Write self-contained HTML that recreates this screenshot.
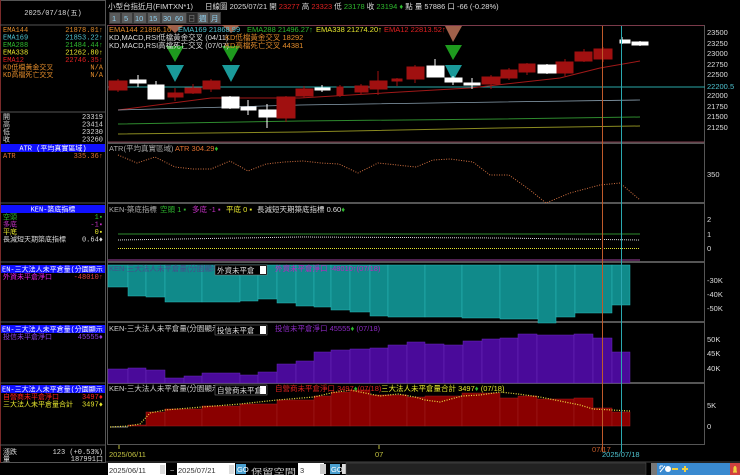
<!DOCTYPE html>
<html><head><meta charset="utf-8"><style>
html,body{margin:0;padding:0;background:#000;width:740px;height:475px;overflow:hidden}
svg{display:block}
text{font-family:"Liberation Sans","Noto Sans CJK TC",sans-serif;font-size:7.5px}
.m{font-family:"Liberation Mono","Noto Sans CJK TC",monospace;font-size:7px}
</style></head><body>
<svg width="740" height="475" viewBox="0 0 740 475" xmlns="http://www.w3.org/2000/svg">
<rect width="740" height="475" fill="#000"/>
<rect x="0.5" y="0.5" width="105" height="462" fill="#000" stroke="#555"/>
<line x1="0.5" y1="0" x2="0.5" y2="463" stroke="#7a2a2a"/>
<line x1="0" y1="25" x2="106" y2="25" stroke="#555"/>
<text x="53" y="15" fill="#ddd" text-anchor="middle" class="m">2025/07/18(五)</text>
<g class="m">
<text x="3" y="32" fill="#e08a2a" class="m">EMA144</text><text x="103" y="32" fill="#e08a2a" text-anchor="end" class="m">21878.01↑</text>
<text x="3" y="39.5" fill="#4fc3d0" class="m">EMA169</text><text x="103" y="39.5" fill="#4fc3d0" text-anchor="end" class="m">21853.22↑</text>
<text x="3" y="47" fill="#2eb82e" class="m">EMA288</text><text x="103" y="47" fill="#2eb82e" text-anchor="end" class="m">21484.44↑</text>
<text x="3" y="54.5" fill="#e6e62e" class="m">EMA338</text><text x="103" y="54.5" fill="#e6e62e" text-anchor="end" class="m">21262.80↑</text>
<text x="3" y="62" fill="#e02020" class="m">EMA12</text><text x="103" y="62" fill="#e02020" text-anchor="end" class="m">22746.35↑</text>
<text x="3" y="69.5" fill="#e08a2a" class="m">KD低檔黃金交叉</text><text x="103" y="69.5" fill="#e08a2a" text-anchor="end" class="m">N/A</text>
<text x="3" y="77" fill="#e08a2a" class="m">KD高檔死亡交叉</text><text x="103" y="77" fill="#e08a2a" text-anchor="end" class="m">N/A</text>
</g>
<line x1="0" y1="112" x2="106" y2="112" stroke="#555"/>
<text x="3" y="119" fill="#ddd" class="m">開</text><text x="103" y="119" fill="#ddd" text-anchor="end" class="m">23319</text>
<text x="3" y="126.5" fill="#ddd" class="m">高</text><text x="103" y="126.5" fill="#ddd" text-anchor="end" class="m">23414</text>
<text x="3" y="134" fill="#ddd" class="m">低</text><text x="103" y="134" fill="#ddd" text-anchor="end" class="m">23230</text>
<text x="3" y="141.5" fill="#ddd" class="m">收</text><text x="103" y="141.5" fill="#ddd" text-anchor="end" class="m">23260</text>
<rect x="1" y="144" width="104" height="8" fill="#1010ff"/>
<text x="53" y="150.5" fill="#fff" text-anchor="middle" class="m">ATR (平均真實區域)</text>
<text x="3" y="158" fill="#e07030" class="m">ATR</text><text x="103" y="158" fill="#e07030" text-anchor="end" class="m">335.36↑</text>
<line x1="0" y1="203" x2="106" y2="203" stroke="#555"/>
<rect x="1" y="205" width="104" height="8" fill="#1010ff"/>
<text x="53" y="211.5" fill="#fff" text-anchor="middle" class="m">KEN-築底指標</text>
<text x="3" y="219" fill="#2eb82e" class="m">空頭</text><text x="103" y="219" fill="#2eb82e" text-anchor="end" class="m">1▪</text>
<text x="3" y="226.5" fill="#c030c0" class="m">多底</text><text x="103" y="226.5" fill="#c030c0" text-anchor="end" class="m">-1▪</text>
<text x="3" y="234" fill="#e6e62e" class="m">平底</text><text x="103" y="234" fill="#e6e62e" text-anchor="end" class="m">0▪</text>
<text x="3" y="241.5" fill="#ddd" class="m">長減短天期築底指標</text><text x="103" y="241.5" fill="#ddd" text-anchor="end" class="m">0.64♦</text>
<line x1="0" y1="262" x2="106" y2="262" stroke="#555"/>
<rect x="1" y="265" width="104" height="8" fill="#1010ff"/>
<text x="2" y="271.5" fill="#fff" class="m">EN-三大法人未平倉量(分園顯示</text>
<text x="3" y="279" fill="#e020e0" class="m">外資未平倉淨口</text><text x="103" y="279" fill="#e04040" text-anchor="end" class="m">-48010↑</text>
<line x1="0" y1="322" x2="106" y2="322" stroke="#555"/>
<rect x="1" y="325" width="104" height="8" fill="#1010ff"/>
<text x="2" y="331.5" fill="#fff" class="m">EN-三大法人未平倉量(分園顯示</text>
<text x="3" y="339" fill="#9040e0" class="m">投信未平倉淨口</text><text x="103" y="339" fill="#9040e0" text-anchor="end" class="m">45555♦</text>
<line x1="0" y1="383" x2="106" y2="383" stroke="#555"/>
<rect x="1" y="385" width="104" height="8" fill="#1010ff"/>
<text x="2" y="391.5" fill="#fff" class="m">EN-三大法人未平倉量(分園顯示</text>
<text x="3" y="399" fill="#ff2020" class="m">自營商未平倉淨口</text><text x="103" y="399" fill="#ff2020" text-anchor="end" class="m">3497♦</text>
<text x="3" y="406.5" fill="#e6e62e" class="m">三大法人未平倉量合計</text><text x="103" y="406.5" fill="#e6e62e" text-anchor="end" class="m">3497♦</text>
<line x1="0" y1="445" x2="106" y2="445" stroke="#555"/>
<text x="3" y="454" fill="#ddd" class="m">漲跌</text><text x="103" y="454" fill="#ddd" text-anchor="end" class="m">123 (+0.53%)</text>
<text x="3" y="461" fill="#ddd" class="m">量</text><text x="103" y="461" fill="#ddd" text-anchor="end" class="m">187991口</text>

<text x="108" y="9" fill="#ddd">小型台指近月(FIMTXN*1)</text>
<text x="205" y="9" fill="#ddd">日線圖  2025/07/21 開 <tspan fill="#e02020">23277</tspan> 高 <tspan fill="#e02020">23323</tspan> 低 <tspan fill="#2eb82e">23178</tspan> 收 <tspan fill="#2eb82e">23194</tspan> <tspan fill="#2eb82e">♦</tspan> 點 量 57886 口 -66 (-0.28%)</text>
<g>
<rect x="109" y="12" width="112" height="12" fill="#3a3a3a"/>
<g fill="#5a5a5a">
<rect x="110" y="13" width="10" height="10"/><rect x="122" y="13" width="10" height="10"/><rect x="134" y="13" width="12" height="10"/><rect x="148" y="13" width="12" height="10"/><rect x="162" y="13" width="12" height="10"/><rect x="174" y="13" width="12" height="10"/><rect x="187" y="13" width="10" height="10" fill="#2a2a2a"/><rect x="198" y="13" width="10" height="10"/><rect x="210" y="13" width="10" height="10"/>
</g>
<g fill="#8fd0f0" font-size="7"><text x="112" y="21">1</text><text x="124" y="21">5</text><text x="135" y="21">10</text><text x="149" y="21">15</text><text x="163" y="21">30</text><text x="175" y="21">60</text><text x="188" y="21" fill="#777">日</text><text x="199" y="21">週</text><text x="211" y="21">月</text></g>
</g>

<rect x="107.5" y="25.5" width="597" height="419" fill="none" stroke="#555"/>
<g stroke="#555" stroke-width="2">
<line x1="107" y1="143" x2="705" y2="143"/><line x1="107" y1="203" x2="705" y2="203"/><line x1="107" y1="262" x2="705" y2="262"/><line x1="107" y1="322" x2="705" y2="322"/><line x1="107" y1="383" x2="705" y2="383"/>
</g>
<line x1="108" y1="25.5" x2="704" y2="25.5" stroke="#7a3a4a"/>
<line x1="108" y1="142" x2="704" y2="142" stroke="#7a3a4a"/>

<line x1="108" y1="87" x2="705" y2="87" stroke="#2aa8a8"/>
<polyline points="118,110 211,98 300,98 400,92 470,88 560,78 600,68 640,61" fill="none" stroke="#a01818"/>
<polyline points="118,110 300,105 500,102 640,100" fill="none" stroke="#8aa0b0" stroke-width="0.8"/>
<polyline points="118,124 300,121 500,119 640,117" fill="none" stroke="#2e8a2e"/>
<polyline points="118,134 300,132 500,128 640,126" fill="none" stroke="#8a8a20"/>
<g>
<polygon points="166,25 184,25 175,33" fill="#a0604a"/><polygon points="222,25 240,25 231,33" fill="#a0604a"/>
<polygon points="166,46 184,46 175,62" fill="#1e9a1e"/><polygon points="222,46 240,46 231,62" fill="#1e9a1e"/>
<polygon points="166,65 184,65 175,82" fill="#1a9a9a"/><polygon points="222,65 240,65 231,82" fill="#1a9a9a"/>
<polygon points="445,26 462,26 453,42" fill="#a0604a"/>
<polygon points="445,45 462,45 453,60" fill="#1e9a1e"/>
<polygon points="445,65 462,65 453,81" fill="#1a9a9a"/>
</g>
<g>
<g fill="#a01010" stroke="#a01010">
<line x1="118" y1="79" x2="118" y2="92"/><rect x="109" y="81" width="18" height="9"/>
<line x1="175" y1="88" x2="175" y2="101"/><rect x="168" y="93" width="15" height="4"/>
<line x1="193" y1="84" x2="193" y2="94"/><rect x="185" y="88" width="16" height="5"/>
<line x1="211" y1="79" x2="211" y2="92"/><rect x="203" y="81" width="17" height="8"/>
<line x1="286" y1="96" x2="286" y2="122"/><rect x="277" y="97" width="18" height="21"/>
<line x1="304" y1="86" x2="304" y2="98"/><rect x="296" y="89" width="17" height="7"/>
<line x1="340" y1="85" x2="340" y2="97"/><rect x="337" y="87" width="6" height="8"/>
<line x1="361" y1="84" x2="361" y2="94"/><rect x="355" y="86" width="13" height="6"/>
<line x1="378" y1="71" x2="378" y2="95"/><rect x="370" y="81" width="17" height="8"/>
<line x1="397" y1="78" x2="397" y2="86"/><rect x="392" y="79" width="10" height="2"/>
<line x1="415" y1="65" x2="415" y2="83"/><rect x="407" y="67" width="17" height="12"/>
<line x1="491" y1="75" x2="491" y2="89"/><rect x="482" y="77" width="18" height="7"/>
<line x1="509" y1="68" x2="509" y2="80"/><rect x="501" y="70" width="16" height="8"/>
<line x1="527" y1="63" x2="527" y2="75"/><rect x="519" y="64" width="16" height="8"/>
<line x1="565" y1="59" x2="565" y2="76"/><rect x="556" y="62" width="17" height="11"/>
<line x1="584" y1="49" x2="584" y2="62"/><rect x="575" y="52" width="17" height="9"/>
<line x1="603" y1="47" x2="603" y2="62"/><rect x="594" y="49" width="18" height="10"/>
</g>
<g fill="#fff" stroke="#fff">
<line x1="138" y1="75" x2="138" y2="87"/><rect x="130" y="80" width="16" height="3"/>
<line x1="156" y1="81" x2="156" y2="99"/><rect x="148" y="85" width="16" height="14"/>
<line x1="230" y1="96" x2="230" y2="109"/><rect x="222" y="97" width="17" height="11"/>
<line x1="248" y1="100" x2="248" y2="115"/><rect x="241" y="107" width="15" height="3"/>
<line x1="267" y1="104" x2="267" y2="128"/><rect x="259" y="110" width="17" height="7"/>
<line x1="322" y1="85" x2="322" y2="92"/><rect x="315" y="88" width="15" height="2"/>
<line x1="435" y1="59" x2="435" y2="77"/><rect x="427" y="66" width="17" height="11"/>
<line x1="453" y1="76" x2="453" y2="85"/><rect x="445" y="78" width="17" height="4"/>
<line x1="472" y1="78" x2="472" y2="89"/><rect x="464" y="83" width="16" height="2"/>
<line x1="547" y1="64" x2="547" y2="74"/><rect x="538" y="65" width="18" height="8"/>
<line x1="622" y1="37" x2="622" y2="44"/><rect x="620" y="40" width="10" height="3"/>
<line x1="640" y1="41" x2="640" y2="46"/><rect x="632" y="42" width="16" height="3"/>
</g>
</g>
<text x="109" y="32" fill="#e08a2a" font-size="7">EMA144 21896.16</text>
<text x="178" y="32" fill="#4fc3d0" font-size="7">EMA169 21868.99</text>
<text x="247" y="32" fill="#2eb82e" font-size="7">EMA288 21496.27↑</text>
<text x="316" y="32" fill="#e6e62e" font-size="7">EMA338 21274.20↑</text>
<text x="384" y="32" fill="#e02020" font-size="7">EMA12 22813.52↑</text>
<text x="109" y="40" fill="#ddd" font-size="7">KD,MACD,RSI低檔黃金交叉  (04/11)</text>
<text x="225" y="40" fill="#e08a2a" font-size="7">KD低檔黃金交叉 18292</text>
<text x="109" y="48" fill="#ddd" font-size="7">KD,MACD,RSI高檔死亡交叉  (07/07)</text>
<text x="225" y="48" fill="#e08a2a" font-size="7">KD高檔死亡交叉 44381</text>
<g fill="#ddd" font-size="7">
<text x="707" y="35">23500</text><text x="707" y="46">23250</text><text x="707" y="56">23000</text><text x="707" y="67">22750</text><text x="707" y="77">22500</text><text x="707" y="89" fill="#4fc3d0">22200.5</text><text x="707" y="98">22000</text><text x="707" y="109">21750</text><text x="707" y="119">21500</text><text x="707" y="130">21250</text>
</g>

<text x="109" y="151" fill="#aaa" font-size="7">ATR(平均真實區域)</text>
<text x="175" y="151" fill="#e07030" font-size="7">ATR 304.29<tspan fill="#2eb82e">♦</tspan></text>
<polyline points="118,155 137,163 155,157 175,167 193,169 211,169 230,161 248,171 266,164 284,162 303,161 321,163 339,164 358,173 378,163 416,167 433,160 450,159 473,162 490,175 509,175 530,190 546,203 570,193 600,185 620,183 640,200" fill="none" stroke="#d07040" stroke-dasharray="1 1.5"/>
<text x="707" y="177" fill="#ddd" font-size="7">350</text>

<text x="109" y="212" fill="#aaa" font-size="7">KEN-築底指標</text>
<text x="160" y="212" fill="#2eb82e" font-size="7">空頭 1 ▪</text>
<text x="192" y="212" fill="#c030c0" font-size="7">多底 -1 ▪</text>
<text x="226" y="212" fill="#e6e62e" font-size="7">平底 0 ▪</text>
<text x="257" y="212" fill="#ddd" font-size="7">長減短天期築底指標 0.60<tspan fill="#2eb82e">♦</tspan></text>
<line x1="118" y1="234" x2="640" y2="234" stroke="#2e8a2e"/>
<polyline points="118,240 300,237 500,238 640,240" fill="none" stroke="#ddd" stroke-dasharray="1 1"/>
<line x1="118" y1="248.5" x2="640" y2="248.5" stroke="#e6e62e" stroke-dasharray="1 1"/>
<line x1="108" y1="260" x2="640" y2="260" stroke="#a040a0"/>
<g fill="#ddd" font-size="7"><text x="707" y="222">2</text><text x="707" y="237">1</text><text x="707" y="251">0</text></g>

<g fill="#108a8a" stroke="#2ababa" stroke-width="0.5">
<rect x="108" y="265" width="20" height="22"/><rect x="128" y="265" width="18" height="31"/><rect x="146" y="265" width="19" height="32"/><rect x="165" y="265" width="37" height="37"/><rect x="202" y="265" width="38" height="37"/><rect x="240" y="265" width="18" height="36"/><rect x="258" y="265" width="19" height="34"/><rect x="277" y="265" width="19" height="38"/><rect x="296" y="265" width="18" height="41"/><rect x="314" y="265" width="17" height="42"/><rect x="331" y="265" width="19" height="45"/><rect x="350" y="265" width="20" height="47"/><rect x="370" y="265" width="18" height="51"/><rect x="388" y="265" width="37" height="52"/><rect x="425" y="265" width="37" height="52"/><rect x="462" y="265" width="38" height="53"/><rect x="500" y="265" width="38" height="54"/><rect x="538" y="265" width="18" height="58"/><rect x="556" y="265" width="19" height="52"/><rect x="575" y="265" width="37" height="48"/><rect x="612" y="265" width="18" height="40"/>
</g>
<text x="109" y="271" fill="#4a4a8a" font-size="7">KEN-三大法人未平倉量(分園顯示)</text>
<rect x="215" y="265" width="52" height="10" fill="#000" stroke="#888" stroke-width="0.5"/><rect x="260" y="266" width="6" height="8" fill="#fff"/>
<text x="217" y="273" fill="#ddd" font-size="6.5">外資未平倉</text>
<text x="275" y="271" fill="#c020c0" font-size="7">外資未平倉淨口 -48010↑(07/18)</text>
<g fill="#ddd" font-size="7"><text x="707" y="283">-30K</text><text x="707" y="297">-40K</text><text x="707" y="311">-50K</text></g>

<g fill="#4a0a9a" stroke="#6a2aba" stroke-width="0.5">
<rect x="108" y="369" width="20" height="14"/><rect x="128" y="368" width="18" height="15"/><rect x="146" y="370" width="19" height="13"/><rect x="165" y="378" width="19" height="5"/><rect x="184" y="376" width="18" height="7"/><rect x="202" y="373" width="38" height="10"/><rect x="240" y="375" width="18" height="8"/><rect x="258" y="372" width="19" height="11"/><rect x="277" y="364" width="19" height="19"/><rect x="296" y="361" width="18" height="22"/><rect x="314" y="352" width="17" height="31"/><rect x="331" y="350" width="19" height="33"/><rect x="350" y="349" width="20" height="34"/><rect x="370" y="348" width="18" height="35"/><rect x="388" y="345" width="19" height="38"/><rect x="407" y="342" width="18" height="41"/><rect x="425" y="344" width="19" height="39"/><rect x="444" y="345" width="19" height="38"/><rect x="463" y="341" width="19" height="42"/><rect x="482" y="339" width="18" height="44"/><rect x="500" y="338" width="18" height="45"/><rect x="518" y="334" width="19" height="49"/><rect x="537" y="335" width="37" height="48"/><rect x="574" y="334" width="19" height="49"/><rect x="593" y="338" width="19" height="45"/><rect x="612" y="352" width="18" height="31"/>
</g>
<text x="109" y="331" fill="#ccc" font-size="7">KEN-三大法人未平倉量(分園顯示)</text>
<rect x="215" y="325" width="52" height="10" fill="#000" stroke="#888" stroke-width="0.5"/><rect x="260" y="326" width="6" height="8" fill="#fff"/>
<text x="217" y="333" fill="#ddd" font-size="6.5">投信未平倉</text>
<text x="275" y="331" fill="#8a2ac0" font-size="7">投信未平倉淨口 45555<tspan fill="#2eb82e">♦</tspan> (07/18)</text>
<g fill="#ddd" font-size="7"><text x="707" y="342">50K</text><text x="707" y="356">45K</text><text x="707" y="371">40K</text></g>

<line x1="110" y1="427" x2="128" y2="427" stroke="#888"/>
<g fill="#8a0000" stroke="#a02020" stroke-width="0.5">
<rect x="128" y="425" width="18" height="1"/><rect x="146" y="412" width="19" height="14"/><rect x="165" y="409" width="37" height="17"/><rect x="202" y="406" width="38" height="20"/><rect x="240" y="404" width="37" height="22"/><rect x="277" y="400" width="37" height="26"/><rect x="314" y="396" width="17" height="30"/><rect x="331" y="392" width="19" height="34"/><rect x="350" y="390" width="20" height="36"/><rect x="370" y="395" width="37" height="31"/><rect x="407" y="397" width="18" height="29"/><rect x="425" y="396" width="37" height="30"/><rect x="462" y="393" width="38" height="33"/><rect x="500" y="398" width="18" height="28"/><rect x="518" y="396" width="19" height="30"/><rect x="537" y="399" width="37" height="27"/><rect x="574" y="398" width="19" height="28"/><rect x="593" y="408" width="19" height="18"/><rect x="612" y="412" width="18" height="14"/>
</g>
<polyline points="110,427 128,426 140,424 150,413 165,410 202,407 240,404 277,400 314,397 331,393 350,390 360,392 370,394 380,396 398,394 415,397 425,400 440,402 462,396 480,395 500,392 518,394 540,397 560,401 580,405 593,409 612,410 630,411" fill="none" stroke="#f0e040" stroke-width="1.2" stroke-dasharray="1 1.5"/>
<text x="109" y="391" fill="#ccc" font-size="7">KEN-三大法人未平倉量(分園顯示)</text>
<rect x="215" y="385" width="52" height="10" fill="#000" stroke="#888" stroke-width="0.5"/><rect x="260" y="386" width="6" height="8" fill="#fff"/>
<text x="217" y="393" fill="#ddd" font-size="6.5">自營商未平倉</text>
<text x="275" y="391" fill="#e02020" font-size="7">自營商未平倉淨口 3497<tspan fill="#2eb82e">♦</tspan>(07/18)</text>
<text x="381" y="391" fill="#e6e62e" font-size="7">三大法人未平倉量合計 3497<tspan fill="#2eb82e">♦</tspan> (07/18)</text>
<g fill="#ddd" font-size="7"><text x="707" y="408">5K</text><text x="707" y="429">0</text></g>

<line x1="602.5" y1="26" x2="602.5" y2="452" stroke="#c05a2a"/>
<line x1="621.5" y1="26" x2="621.5" y2="452" stroke="#2aa8b0"/>

<line x1="119" y1="445" x2="119" y2="449" stroke="#c0c040"/>
<text x="109" y="457" fill="#c0c040" font-size="7">2025/06/11</text>
<line x1="379" y1="445" x2="379" y2="449" stroke="#c0c040"/>
<text x="375" y="457" fill="#c0c040" font-size="7">07</text>
<text x="592" y="452" fill="#c05a2a" font-size="6.5">07/17</text>
<text x="602" y="457" fill="#4fc3d0" font-size="7">2025/07/18</text>
<line x1="106" y1="462" x2="740" y2="462" stroke="#444"/>

<rect x="108" y="463" width="58" height="12" fill="#fff"/><text x="109" y="473" fill="#333" font-size="9">2025/06/11</text><rect x="160" y="465" width="5" height="9" fill="#ddd"/>
<text x="170" y="473" fill="#ddd" font-size="9">~</text>
<rect x="177" y="463" width="58" height="12" fill="#fff"/><text x="178" y="473" fill="#333" font-size="9">2025/07/21</text><rect x="229" y="465" width="5" height="9" fill="#ddd"/>
<rect x="236" y="464" width="10" height="10" fill="#4aa0d0"/><text x="237" y="472" fill="#fff" font-size="5.5">GO</text>
<text x="251" y="474" fill="#ccc" font-size="13" textLength="45" lengthAdjust="spacingAndGlyphs">保留空間</text>
<rect x="298" y="463" width="26" height="12" fill="#fff"/><text x="300" y="473" fill="#333" font-size="9">3</text>
<rect x="320" y="464" width="6" height="10" fill="#ccc"/>
<rect x="330" y="464" width="10" height="10" fill="#4aa0d0"/><text x="331" y="472" fill="#fff" font-size="5.5">GO</text>
<rect x="342" y="464" width="4" height="10" fill="#ddd"/>
<rect x="346" y="463" width="300" height="12" fill="#222" stroke="#555" stroke-width="0.5"/>
<rect x="651" y="463" width="6" height="12" fill="#777"/>
<g fill="#3a8ad0"><rect x="657" y="463" width="13" height="12"/><rect x="670" y="463" width="10" height="12"/><rect x="680" y="463" width="10" height="12"/><rect x="690" y="463" width="10" height="12"/><rect x="700" y="463" width="10" height="12"/><rect x="710" y="463" width="10" height="12"/><rect x="720" y="463" width="10" height="12"/></g>
<rect x="730" y="463" width="10" height="12" fill="#d04040"/>
<circle cx="668" cy="469" r="3" fill="#fff"/>
<rect x="672" y="468" width="6" height="2" fill="#f0d040"/>
<rect x="682" y="468" width="6" height="2" fill="#f0d040"/><rect x="684" y="466" width="2" height="6" fill="#f0d040"/>
<path d="M660 472 L665 466 M660 466 H663 M660 466 V469" stroke="#fff" stroke-width="1" fill="none"/>
<path d="M733 472 H737 M734 472 V468 Q735 465 736 468 V472" stroke="#f0d040" stroke-width="1.2" fill="#f0d040"/>
</svg>
</body></html>
